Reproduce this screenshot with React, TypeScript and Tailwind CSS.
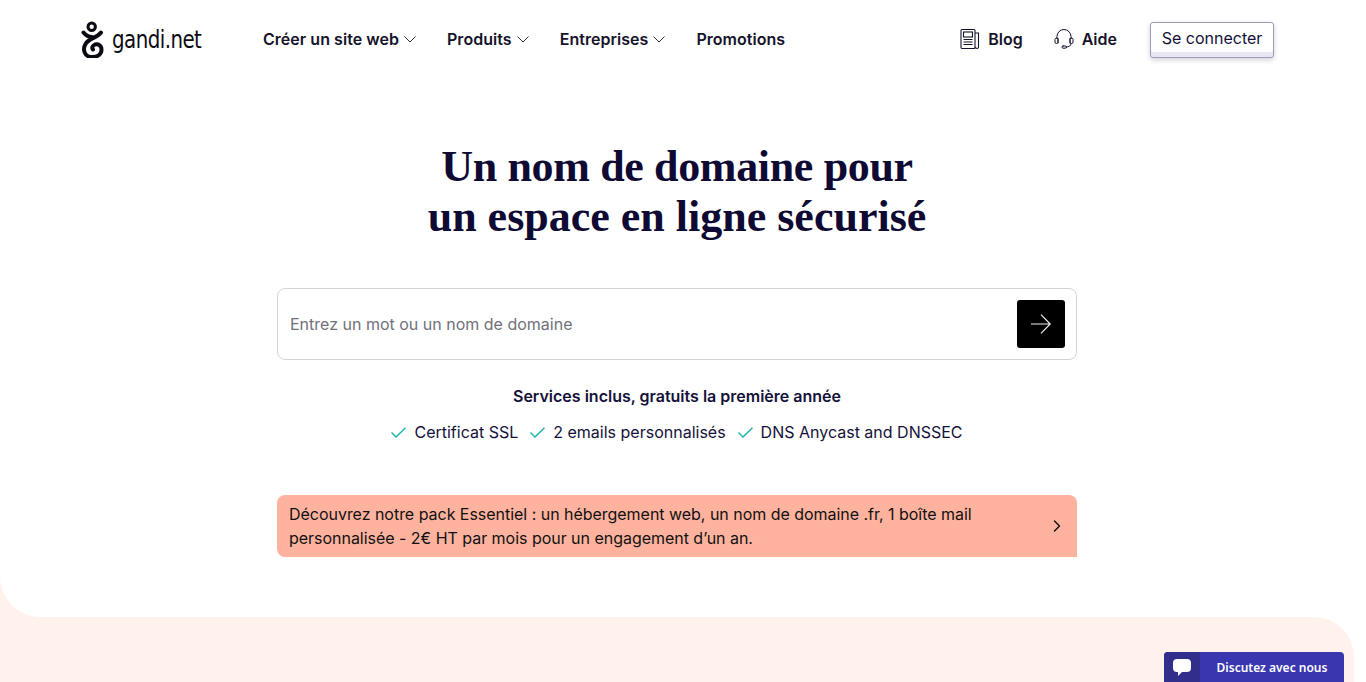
import React from 'react';
import { ChevronRight } from 'lucide-react';

const navItems = [
  { label: 'Créer un site web', menu: true },
  { label: 'Produits', menu: true },
  { label: 'Entreprises', menu: true },
  { label: 'Promotions', menu: false },
];

const services = ['Certificat SSL', '2 emails personnalisés', 'DNS Anycast and DNSSEC'];

const Logo = () => (
  <div className="flex w-[122px] items-center gap-[7px]">
    <svg width="24" height="38" viewBox="0 0 24 38" fill="none" stroke="#0b0b14" strokeWidth="4" strokeLinecap="round" className="shrink-0">
      <circle cx="10.7" cy="6.7" r="3.7" strokeWidth="3" />
      <path d="M2.5 12.5 C5 15.5 8 17 11 17" />
      <path d="M20 12.5 C16 18 8 18 4.5 24 C1.5 29 3 37 11 37 C17 37 20.5 34 20.5 29.5 C20.5 25.5 17 23.5 14 24.5 C11.5 25.5 10.5 28 12 29.5" />
    </svg>
    <span className="origin-left scale-x-[0.88] font-['DejaVu_Sans'] text-[25px] leading-none tracking-[-0.6px] text-[#0b0b14] [font-stretch:condensed]">gandi.net</span>
  </div>
);

const Caret = () => (
  <svg width="12" height="7" viewBox="0 0 12 7" fill="none" stroke="#15132b" strokeWidth="0.9">
    <path d="M0.5 0.5 L6 6 L11.5 0.5" />
  </svg>
);

const Tick = () => (
  <svg width="15" height="11" viewBox="0 0 15 11" fill="none" stroke="#1fb5ad" strokeWidth="1.5" className="shrink-0">
    <path d="M0.5 5.5 L5 10 L14.5 0.7" />
  </svg>
);

const BlogIcon = () => (
  <svg width="20" height="22" viewBox="0 0 20 22" fill="none" stroke="#15132b" strokeWidth="1.1">
    <rect x="1" y="1.5" width="14" height="19" rx="1" />
    <rect x="3.5" y="4" width="9" height="5" />
    <path d="M3.5 11.5h9M3.5 14h9M3.5 16.5h9" />
    <path d="M15 5h3.5v14a1.5 1.5 0 0 1-3 0" />
  </svg>
);

const HeadsetIcon = () => (
  <svg width="20" height="22" viewBox="0 0 20 22" fill="none" stroke="#15132b" strokeWidth="1" strokeLinecap="round">
    <path d="M3 10V8.5a7 7 0 0 1 14 0V10" />
    <rect x="1" y="10" width="3" height="5.5" rx="1.5" />
    <rect x="16" y="10" width="3" height="5.5" rx="1.5" />
    <path d="M4 10.5v4.5M16 10.5v4.5" />
    <path d="M17 15.5c0 2.5-2 3.5-5 3.5" />
    <rect x="8" y="18" width="4.5" height="2.2" rx="1.1" />
  </svg>
);

const Arrow = () => (
  <svg width="20" height="20" viewBox="0 0 20 20" fill="none" stroke="#f2f2f2" strokeWidth="1.2">
    <path d="M0 10H19.2M10 0.6 L19.2 10 L10 19.4" />
  </svg>
);

export default function App() {
  return (
    <div className="h-[682px] w-full overflow-hidden bg-white font-['Inter',sans-serif] text-[#14113a]">
      <div className="relative w-[1354px]">
        <div className="bg-[#fff2ed]">
          <div className="h-[617px] rounded-bl-[40px] bg-white">
            <header className="flex h-[78px] items-center pl-[81px] pr-[80px] text-[#15132b]">
              <Logo />
              <nav className="ml-[60px] flex items-center gap-[31px]">
                {navItems.map((item) => (
                  <a key={item.label} className="flex items-center gap-[5px] text-[16px] font-semibold tracking-[0.04px]">
                    {item.label}
                    {item.menu && <Caret />}
                  </a>
                ))}
              </nav>
              <div className="ml-auto flex items-center">
                <a className="flex items-center gap-[8px] text-[16px] font-semibold">
                  <BlogIcon />
                  Blog
                </a>
                <a className="ml-[31px] flex items-center gap-[8px] text-[16px] font-semibold">
                  <HeadsetIcon />
                  Aide
                </a>
                <button className="ml-[33px] mt-[2px] h-[36px] w-[124px] rounded-[3px] border border-[#9d9bb8] bg-white text-[16px] leading-[30px] text-[#14113a] shadow-[inset_0_-5px_0_#e7e7f4,0_2px_5px_rgba(30,30,80,0.2)]">
                  <span className="relative top-[-2px]">Se connecter</span>
                </button>
              </div>
            </header>

            <main className="mx-auto flex w-[800px] flex-col items-center">
              <h1 className="mt-[64px] text-center font-['Liberation_Serif',serif] text-[44px] font-bold leading-[50px] text-[#0e0a33]">
                <span className="tracking-[-0.35px]">Un nom de domaine pour</span>
                <br />
                un espace en ligne sécurisé
              </h1>

              <div className="mt-[46px] flex h-[72px] w-full items-center justify-between rounded-[8px] border border-[#d4d4d8] pl-[12px] pr-[11px]">
                <span className="text-[16px] text-[#71717a]">Entrez un mot ou un nom de domaine</span>
                <button className="flex h-[48px] w-[48px] items-center justify-center rounded-[3px] bg-black">
                  <Arrow />
                </button>
              </div>

              <p className="mt-[24px] text-[16px] font-semibold leading-[24px]">Services inclus, gratuits la première année</p>
              <ul className="mt-[12px] flex items-center gap-[12px]">
                {services.map((s) => (
                  <li key={s} className="flex items-center gap-[8px] text-[16px] leading-[24px]">
                    <Tick />
                    {s}
                  </li>
                ))}
              </ul>

              <a className="mt-[51px] flex h-[62px] w-full items-center justify-between rounded-t-[8px] rounded-bl-[8px] bg-[#ffb39f] pl-[12px] pr-[10px] text-[16px] leading-[24px] tracking-[-0.03px] text-[#111]">
                <span className="w-[720px]">
                  Découvrez notre pack Essentiel : un hébergement web, un nom de domaine .fr, 1 boîte mail personnalisée - 2€ HT par mois pour un engagement d’un an.
                </span>
                <ChevronRight size={20} strokeWidth={1.7} />
              </a>
            </main>
          </div>
        </div>
        <div className="h-[65px] rounded-tr-[40px] bg-[#fff2ed]" />

        <div className="absolute left-[1164px] top-[652px] flex h-[30px] w-[180px] overflow-hidden rounded-t-[4px] bg-[#3a36b0] text-white">
          <div className="flex w-[36px] items-start justify-center bg-[#322e8c] pt-[7px]">
            <svg width="18" height="17" viewBox="0 0 18 17" fill="white">
              <path d="M4 0h10a4 4 0 0 1 4 4v5a4 4 0 0 1-4 4H9l-4 4v-4H4a4 4 0 0 1-4-4V4a4 4 0 0 1 4-4z" />
            </svg>
          </div>
          <span className="flex-1 pt-[8px] text-center font-['Noto_Sans',sans-serif] text-[12px] font-semibold leading-[16px]">Discutez avec nous</span>
        </div>
      </div>
    </div>
  );
}
